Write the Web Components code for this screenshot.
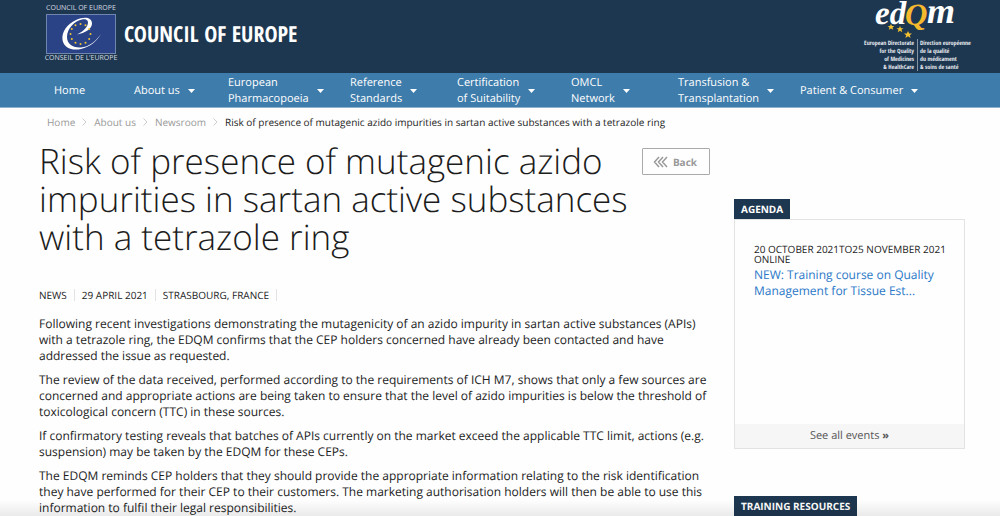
<!DOCTYPE html>
<html lang="en">
<head>
<meta charset="utf-8">
<meta name="viewport" content="width=device-width, initial-scale=1">
<title>Risk of presence of mutagenic azido impurities in sartan active substances with a tetrazole ring</title>
<style>
html{--navy:#1e3750;--blue:#3e7cab;--ink:#1c1c1c;--line:#e3e3e3}
body{margin:0;background:#fefefe;color:var(--ink);font:12px/16px "Open Sans","Noto Sans",sans-serif;text-rendering:geometricPrecision}
</style>
</head>
<body>
<edqm-page>
  <site-header slot="header"></site-header>
  <site-nav slot="header">
    <nav-item>Home</nav-item>
    <nav-item menu>About us</nav-item>
    <nav-item menu>European<br>Pharmacopoeia</nav-item>
    <nav-item menu>Reference<br>Standards</nav-item>
    <nav-item menu>Certification<br>of Suitability</nav-item>
    <nav-item menu>OMCL<br>Network</nav-item>
    <nav-item menu>Transfusion &amp;<br>Transplantation</nav-item>
    <nav-item menu>Patient &amp; Consumer</nav-item>
  </site-nav>
  <bread-crumbs slot="header"></bread-crumbs>
  <news-article>
    <span slot="title">Risk of presence of mutagenic azido impurities in sartan active substances with a tetrazole ring</span>
    <p>Following recent investigations demonstrating the mutagenicity of an azido impurity in sartan active substances (APIs) with a tetrazole ring, the EDQM confirms that the CEP holders concerned have already been contacted and have addressed the issue as requested.</p>
    <p>The review of the data received, performed according to the requirements of ICH M7, shows that only a few sources are concerned and appropriate actions are being taken to ensure that the level of azido impurities is below the threshold of toxicological concern (TTC) in these sources.</p>
    <p>If confirmatory testing reveals that batches of APIs currently on the market exceed the applicable TTC limit, actions (e.g. suspension) may be taken by the EDQM for these CEPs.</p>
    <p>The EDQM reminds CEP holders that they should provide the appropriate information relating to the risk identification they have performed for their CEP to their customers. The marketing authorisation holders will then be able to use this information to fulfil their legal responsibilities.</p>
  </news-article>
  <side-panel slot="side">
    <span slot="heading">AGENDA</span>
    <agenda-event>
      <span slot="date">20 OCTOBER 2021TO25 NOVEMBER 2021 ONLINE</span>
      NEW: Training course on Quality Management for Tissue Est...
    </agenda-event>
  </side-panel>
  <side-panel slot="side" bare>
    <span slot="heading">TRAINING RESOURCES</span>
  </side-panel>
</edqm-page>

<script>
function define(name, html) {
  const t = document.createElement('template');
  t.innerHTML = html;
  customElements.define(name, class extends HTMLElement {
    constructor() {
      super();
      this.attachShadow({mode: 'open'}).append(t.content.cloneNode(true));
    }
  });
}

define('edqm-page', `
<style>
:host{display:block}
main{display:grid;grid-template-columns:minmax(0,1fr) 231px;gap:24px;padding:13px 35px 0 39px;align-items:start}
aside{display:grid;gap:47px;padding-top:56px}
.fade{position:fixed;left:0;right:0;bottom:0;height:16px;background:linear-gradient(#0000,#00000014);pointer-events:none}
</style>
<slot name="header"></slot>
<main><slot></slot><aside><slot name="side"></slot></aside></main>
<div class="fade"></div>`);

define('site-header', `
<style>
:host{display:block;background:var(--navy);color:#fff}
header{display:flex;justify-content:space-between;min-height:73px;padding:0 28px 0 46px;box-sizing:border-box}
a{color:inherit;text-decoration:none}
.coe{display:flex;align-items:center;gap:8px;padding-bottom:6px}
.mark{display:grid;grid-template-columns:70px;justify-items:center;font-size:7px;line-height:8px;color:#d5dbe3;white-space:nowrap;gap:1px}
.mark svg{display:block}
.name{font:bold 22px/24px "Liberation Sans Narrow","Open Sans Condensed","Liberation Sans",sans-serif}
.edqm{display:grid;justify-items:center;align-content:start;width:112px}
.edqm svg{display:block;overflow:visible}
.words{display:grid;grid-template-columns:58px 54px;font:bold 6px/8px "Liberation Sans Narrow","Open Sans Condensed","Liberation Sans",sans-serif;color:#e6eaef;white-space:nowrap}
.words span:first-child{text-align:right;padding-right:3px;border-right:1px solid #8593a3}
.words span:last-child{padding-left:2px}
</style>
<header>
<a class="coe" href="#">
 <span class="mark"><span>COUNCIL OF EUROPE</span>
 <svg width="70" height="40" viewBox="0 0 70 40" aria-hidden="true">
  <rect x=".5" y=".5" width="69" height="39" fill="#2a4387" stroke="#7186ae"/>
  <path d="M31 20.500C39 19 46 15 46 9.500C46 3 38 2 30 6C21 10 15.500 18 16.500 26C18 34 26 37 35 35C44 33 51 27 55 20C50 27 43 33 35 33.500C26 34 21 29.500 21 23C21 14 29 7 36 5.500C41 4.500 43 7 41.500 11C40 15 36 18 31 20.500Z" fill="#fff"/>
  <g id="stars" fill="#f2c52e"></g>
 </svg>
 <span>CONSEIL DE L’EUROPE</span></span>
 <span class="name">COUNCIL OF EUROPE</span>
</a>
<a class="edqm" href="#">
 <svg width="112" height="39" viewBox="0 0 112 39">
  <g font-family="Liberation Serif" font-style="italic" font-weight="bold" fill="#fff">
   <text x="15" y="24" font-size="33">ed</text>
   <text x="45" y="25" font-size="31" fill="#f5b92e">Q</text>
   <text x="67" y="23" font-size="36">m</text>
  </g>
  <path fill="#f5c22e" d="M31 24l1 2h2.300l-1.800 1.500.7 2.300-2.200-1.400-2.200 1.400.7-2.300-1.800-1.500h2.300zM40 26l1 2.200h2.500l-2 1.600.8 2.500-2.300-1.500-2.300 1.500.8-2.500-2-1.600h2.500zM48 31l1.200 2.500h2.800l-2.200 1.700.8 2.700-2.600-1.600-2.600 1.600.8-2.700-2.200-1.700h2.800z"/>
 </svg>
 <span class="words">
  <span>European Directorate<br>for the Quality<br>of Medicines<br>&amp; HealthCare</span>
  <span>Direction européenne<br>de la qualité<br>du médicament<br>&amp; soins de santé</span>
 </span>
</a>
</header>`);

define('site-nav', `
<style>
:host{display:block;background:var(--blue);color:#fff;border-bottom:1px solid #8fb1cc}
nav{display:grid;grid-template-columns:80fr 94fr 122fr 107fr 114fr 107fr 122fr 200fr;align-items:center;min-height:34px;padding:2px 0 0 54px;box-sizing:border-box}
</style>
<nav aria-label="Main"><slot></slot></nav>`);

define('nav-item', `
<style>
:host{display:block}
a{display:flex;align-items:center;gap:8px;color:inherit;text-decoration:none;white-space:nowrap;font-size:11px;line-height:16px}
svg{display:none}
:host([menu]) svg{display:block}
</style>
<a href="#"><span><slot></slot></span><svg width="7" height="4" viewBox="0 0 7 4" aria-hidden="true"><path d="M0 0h7L3.500 4z" fill="#fff"/></svg></a>`);

define('bread-crumbs', `
<style>
:host{display:block;padding:6px 39px 0 47px;font-size:10px;line-height:16px}
ol{display:flex;flex-wrap:wrap;align-items:center;gap:7px;margin:0;padding:0;list-style:none}
li{display:flex;align-items:center;gap:7px}
a{color:#999;text-decoration:none}
svg{display:block}
path{fill:none;stroke:#ccc}
</style>
<nav aria-label="Breadcrumb"><ol>
<li><a href="#">Home</a><svg width="5" height="8"><path d="M.5.5l3.500 3.500-3.500 3.500"/></svg></li>
<li><a href="#">About us</a><svg width="5" height="8"><path d="M.5.5l3.500 3.500-3.500 3.500"/></svg></li>
<li><a href="#">Newsroom</a><svg width="5" height="8"><path d="M.5.5l3.500 3.500-3.500 3.500"/></svg></li>
<li aria-current="page">Risk of presence of mutagenic azido impurities in sartan active substances with a tetrazole ring</li>
</ol></nav>`);

define('news-article', `
<style>
:host{display:block}
.top{display:flex;justify-content:space-between;align-items:flex-start}
h1{margin:0;font-size:35px;line-height:38px;font-weight:300;max-width:600px}
button{display:flex;align-items:center;gap:5px;margin:5px 0 0;padding:0 12px 0 10px;height:27px;border:1px solid #aaa;border-radius:1px;background:none;color:#999;font:bold 10px/16px "Open Sans",sans-serif;text-rendering:inherit}
ul{display:flex;margin:32px 0 15px;padding:0;list-style:none;font-size:10px;line-height:12px}
li{padding-right:7px;margin-right:7px;border-right:1px solid var(--line)}
::slotted(p){margin:0 0 8px}
</style>
<article>
<div class="top"><h1><slot name="title"></slot></h1>
<button type="button"><svg width="15" height="12" viewBox="0 0 15 12" aria-hidden="true"><path d="M6 1L1.500 6 6 11M10 1L5.500 6 10 11M14 1L9.500 6 14 11" fill="none" stroke="#999" stroke-width="1.500"/></svg>Back</button></div>
<ul><li>NEWS</li><li>29 APRIL 2021</li><li>STRASBOURG, FRANCE</li></ul>
<slot></slot>
</article>`);

define('side-panel', `
<style>
:host{display:block}
h2{display:table;margin:0;padding:2px 7px;background:var(--navy);color:#fff;font-size:10px;line-height:16px;font-weight:bold}
.box{border:1px solid var(--line);display:flex;flex-direction:column;min-height:228px}
.body{flex:1;padding:24px 12px 0 19px}
.all{display:block;padding:4px 0;background:#f6f6f6;color:#555;text-align:center;font-size:11px;text-decoration:none}
:host([bare]) .box{min-height:0;border-width:1px 0 0;border-color:#ccc}
:host([bare]) .box>*{display:none}
</style>
<section><h2><slot name="heading"></slot></h2>
<div class="box"><div class="body"><slot></slot></div><a class="all" href="#">See all events <b>»</b></a></div></section>`);

define('agenda-event', `
<style>
:host{display:block}
div{font-size:10px;line-height:10px;margin-bottom:3px}
a{color:#2a78c8;text-decoration:none}
</style>
<div><slot name="date"></slot></div><a href="#"><slot></slot></a>`);

/* The twelve stars ringed inside the Council of Europe emblem. */
const ring = document.querySelector('site-header').shadowRoot.querySelector('#stars');
for (let i = 0; i < 12; i++) {
  const c = document.createElementNS('http://www.w3.org/2000/svg', 'circle');
  const a = i * Math.PI / 6;
  c.setAttribute('cx', 34.5 + 10 * Math.sin(a));
  c.setAttribute('cy', 20 - 10 * Math.cos(a));
  c.setAttribute('r', 1);
  ring.append(c);
}
</script>
</body>
</html>
